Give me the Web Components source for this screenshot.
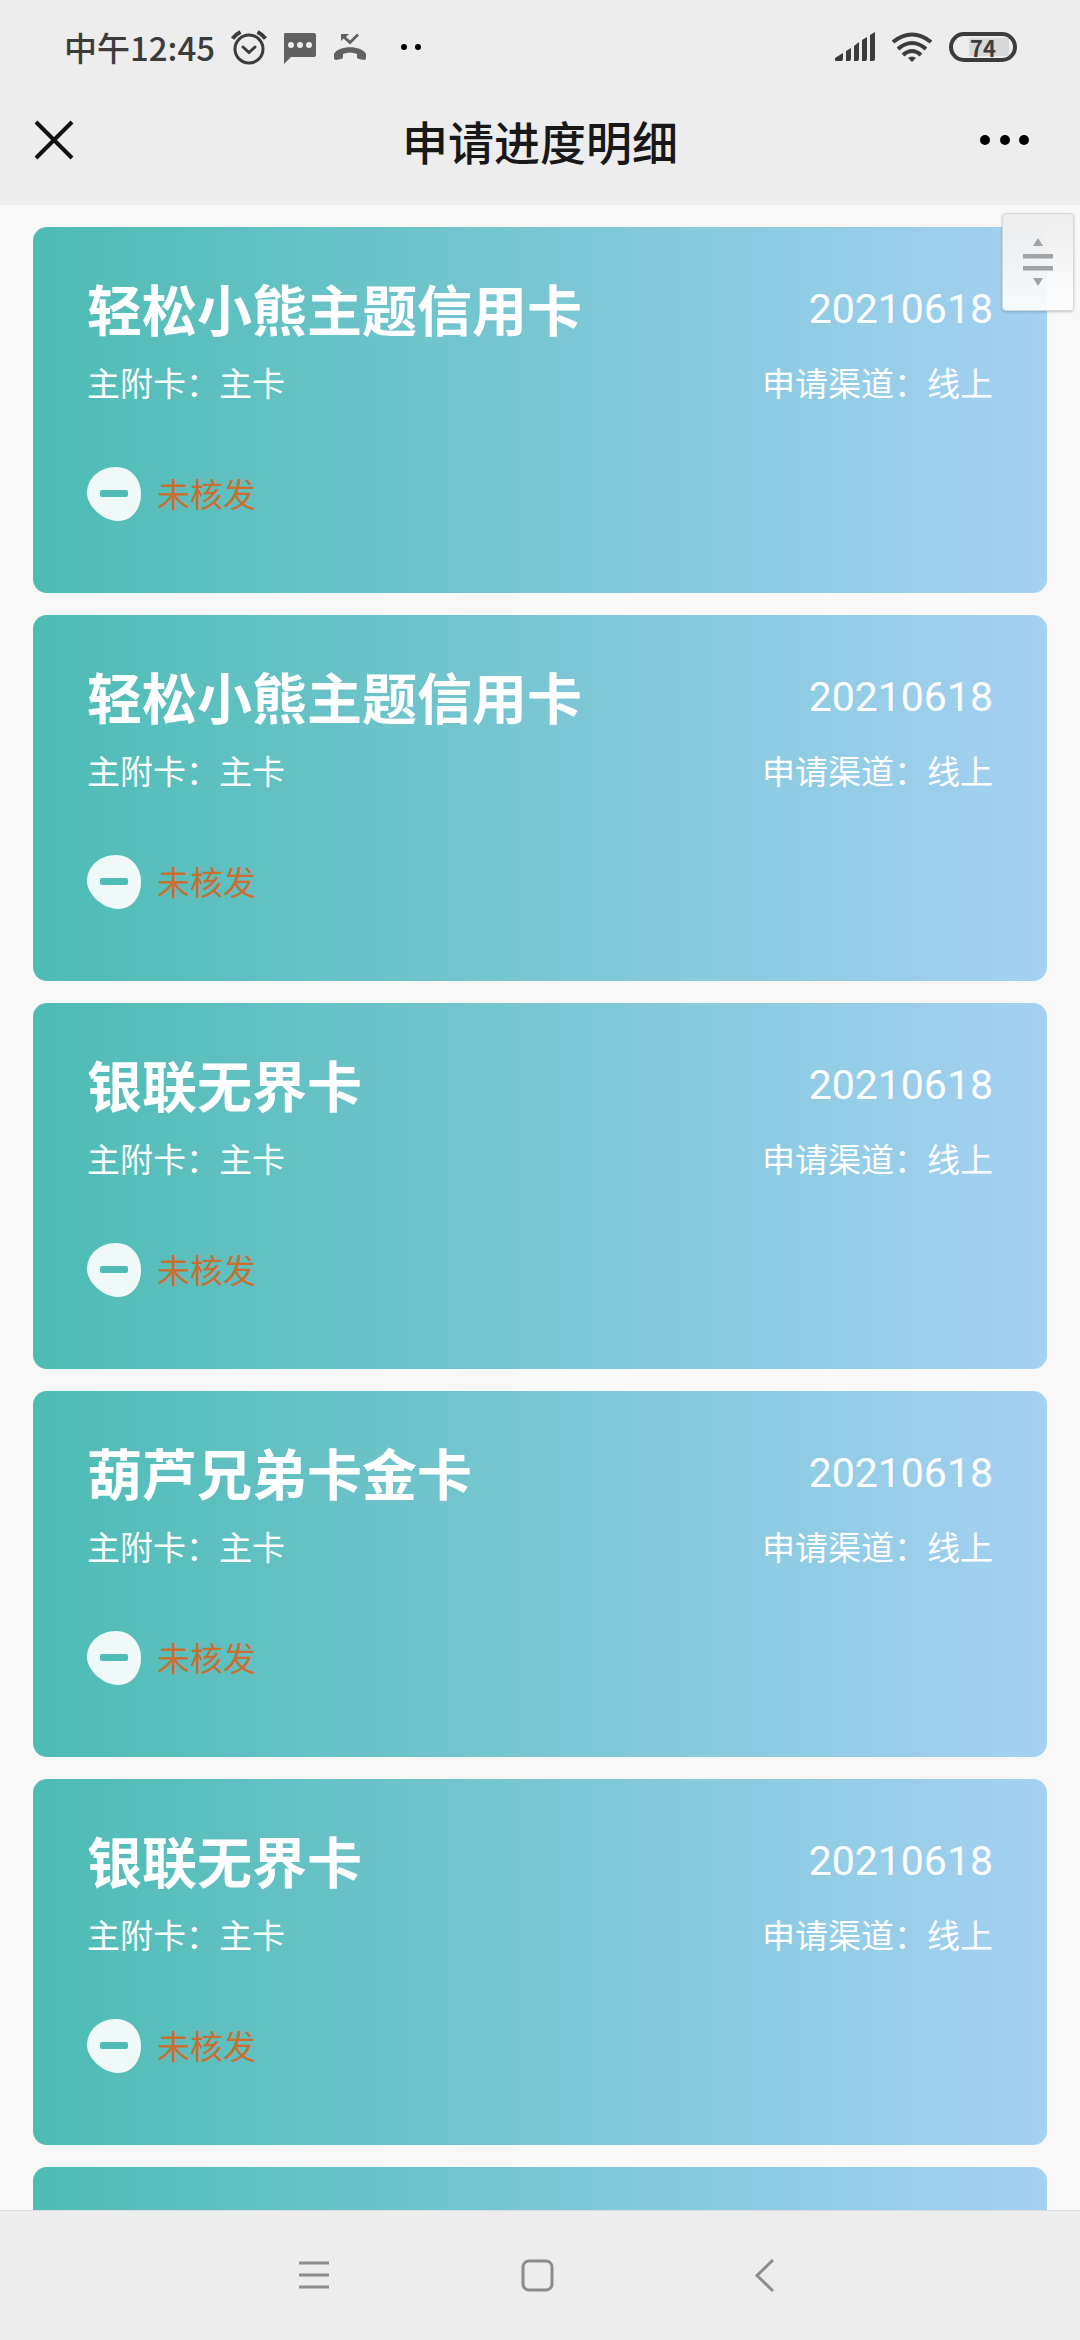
<!DOCTYPE html>
<html lang="zh-CN">
<head>
<meta charset="utf-8">
<meta name="viewport" content="width=device-width, initial-scale=1">
<title>申请进度明细</title>
<style>
  body {
    margin: 0;
    background: #f8f8f8;
    font-family: Roboto, "Noto Sans CJK SC", sans-serif;
  }
</style>
</head>
<body>
<progress-page>
  <status-bar slot="top" time="中午12:45" battery="74"></status-bar>
  <title-bar slot="top">申请进度明细</title-bar>

  <apply-card>
    <span slot="name">轻松小熊主题信用卡</span>
    <span slot="date">20210618</span>
    <span slot="type">主附卡：主卡</span>
    <span slot="channel">申请渠道：线上</span>
    <span slot="state">未核发</span>
  </apply-card>
  <apply-card>
    <span slot="name">轻松小熊主题信用卡</span>
    <span slot="date">20210618</span>
    <span slot="type">主附卡：主卡</span>
    <span slot="channel">申请渠道：线上</span>
    <span slot="state">未核发</span>
  </apply-card>
  <apply-card>
    <span slot="name">银联无界卡</span>
    <span slot="date">20210618</span>
    <span slot="type">主附卡：主卡</span>
    <span slot="channel">申请渠道：线上</span>
    <span slot="state">未核发</span>
  </apply-card>
  <apply-card>
    <span slot="name">葫芦兄弟卡金卡</span>
    <span slot="date">20210618</span>
    <span slot="type">主附卡：主卡</span>
    <span slot="channel">申请渠道：线上</span>
    <span slot="state">未核发</span>
  </apply-card>
  <apply-card>
    <span slot="name">银联无界卡</span>
    <span slot="date">20210618</span>
    <span slot="type">主附卡：主卡</span>
    <span slot="channel">申请渠道：线上</span>
    <span slot="state">未核发</span>
  </apply-card>
  <apply-card></apply-card>

  <scroll-handle slot="float"></scroll-handle>
  <nav-bar slot="bottom"></nav-bar>
</progress-page>

<script>
function attach(el, html) {
  const template = document.createElement("template");
  template.innerHTML = html;
  el.attachShadow({ mode: "open" });
  el.shadowRoot.appendChild(template.content.cloneNode(true));
}

// page frame: bars at top and bottom, scrolling list between them
class ProgressPage extends HTMLElement {
  constructor() {
    super();
    attach(this, `
<style>
:host {
  display: flex;
  flex-direction: column;
  height: 100vh;
}

main {
  position: relative;
  flex: 1;
  min-height: 0;
  overflow: hidden;
}

.list {
  display: flex;
  flex-direction: column;
  gap: 22px;
  box-sizing: border-box;
  height: 100%;
  padding: 22px 33px;
  overflow-y: auto;
  scrollbar-width: none;
}
</style>
<header><slot name="top"></slot></header>
<main>
  <div class="list"><slot></slot></div>
  <slot name="float"></slot>
</main>
<slot name="bottom"></slot>`);
  }
}

class StatusBar extends HTMLElement {
  constructor() {
    super();
    attach(this, `
<style>
:host {
  display: flex;
  align-items: center;
  justify-content: space-between;
  height: 94px;
  padding: 0 63px 0 64px;
  background: #ededed;
  color: #3c3c3c;
}

.side {
  display: flex;
  align-items: center;
  gap: 16px;
}

.time {
  font: 500 33px/48px "Noto Sans CJK SC", sans-serif;
}

svg {
  display: block;
}

.battery {
  display: flex;
  align-items: center;
  justify-content: center;
  box-sizing: border-box;
  width: 68px;
  height: 30px;
  border: 4px solid #3c3c3c;
  border-radius: 15px;
  background: linear-gradient(#d8d8d8, #d8d8d8) 16px 2px / 40px 18px no-repeat;
  font: 700 22px/24px "Noto Sans CJK SC", sans-serif;
}
</style>
<div class="side">
  <span class="time"></span>
  <svg width="36" height="36" viewBox="0 0 36 36" fill="none" stroke="#3c3c3c" stroke-width="3">
    <circle cx="18" cy="20" r="14"/>
    <path d="M12 18l6 5.500 6-5.500" stroke-linecap="round"/>
    <path d="M1.500 9.500q3-4 8-6.500M34.500 9.500q-3-4-8-6.500" stroke-width="4"/>
  </svg>
  <svg width="34" height="34" viewBox="0 0 34 34">
    <path d="M2 3h29q2 0 2 2v20q0 2-2 2H8l-7 7V5q0-2 1-2z" fill="#616161"/>
    <g fill="#ededed"><circle cx="8" cy="15" r="3"/><circle cx="17" cy="15" r="3"/><circle cx="26" cy="15" r="3"/></g>
  </svg>
  <svg width="34" height="34" viewBox="0 0 34 34" fill="#616161">
    <path d="M1 24C5 15 29 15 33 24v4q0 2-2 2l-5-1q-2 0-2-2v-3q-7-3-14 0v3q0 2-2 2l-5 1q-2 0-2-2z"/>
    <path d="M8 4h8l-3 3 4 3.500 7-7 2 2-9 9-6.500-6L8 11z"/>
  </svg>
  <svg width="56" height="34" viewBox="0 0 56 34">
    <circle cx="21" cy="17" r="3"/><circle cx="35" cy="17" r="3"/>
  </svg>
</div>
<div class="side">
  <svg width="40" height="30" viewBox="0 0 40 30" fill="#3c3c3c">
    <path d="M0 26l8-5v6q0 2-2 2H1q-1 0-1-1z"/>
    <path d="M11 19l5-3v11q0 2-2 2h-3zM19 14l5-4v17q0 2-2 2h-3zM27 8l5-3v22q0 2-2 2h-3zM35 3l5-3v27q0 2-2 2h-3z"/>
  </svg>
  <svg width="42" height="30" viewBox="0 0 42 30" fill="none" stroke="#3c3c3c" stroke-width="4">
    <path d="M2 10q19-15 38 0M7 17q14-12 28 0M12 23q9-8 18 0"/>
    <path d="M17 26q4-3 8 0l-4 4z" fill="#3c3c3c" stroke="none"/>
  </svg>
  <span class="battery"></span>
</div>`);
    this.shadowRoot.querySelector(".time").textContent = this.getAttribute("time");
    this.shadowRoot.querySelector(".battery").textContent = this.getAttribute("battery");
  }
}

class TitleBar extends HTMLElement {
  constructor() {
    super();
    attach(this, `
<style>
:host {
  display: grid;
  grid-template-columns: 1fr auto 1fr;
  align-items: center;
  height: 92px;
  padding: 0 32px 19px;
  background: #ededed;
}

h1 {
  margin: 0;
  color: #181818;
  font: 500 46px/64px "Noto Sans CJK SC", sans-serif;
}

button {
  display: block;
  padding: 0;
  border: 0;
  background: none;
}

button:last-of-type {
  justify-self: end;
}

svg {
  display: block;
}
</style>
<button type="button" aria-label="关闭">
  <svg width="44" height="44" viewBox="0 0 44 44" stroke="#111" stroke-width="4"><path d="M4 4l36 36M40 4L4 40"/></svg>
</button>
<h1><slot></slot></h1>
<button type="button" aria-label="更多">
  <svg width="72" height="44" viewBox="0 0 72 44">
    <circle cx="9" cy="22" r="5"/><circle cx="29" cy="22" r="5"/><circle cx="48" cy="22" r="5"/>
  </svg>
</button>`);
  }
}

class ApplyCard extends HTMLElement {
  constructor() {
    super();
    attach(this, `
<style>
:host {
  display: block;
  flex: none;
  box-sizing: border-box;
  min-height: 366px;
  padding: 52px 54px;
  border-radius: 14px;
  background: linear-gradient(to right, #4dbcb4, #a5d1f3);
  color: #fff;
}

:host(:empty) * {
  display: none;
}

.row {
  display: flex;
  justify-content: space-between;
  font-size: 33px;
  line-height: 48px;
}

.head {
  align-items: flex-start;
  margin-bottom: 16px;
}

h2 {
  margin: 0;
  font-size: 55px;
  font-weight: 700;
  line-height: 66px;
}

.date {
  font-size: 41px;
  line-height: 60px;
}

.state {
  display: flex;
  align-items: flex-start;
  gap: 16px;
  margin-top: 58px;
  color: #c96f30;
  font-size: 33px;
  line-height: 58px;
}
</style>
<div class="row head">
  <h2><slot name="name"></slot></h2>
  <span class="date"><slot name="date"></slot></span>
</div>
<div class="row">
  <slot name="type"></slot>
  <slot name="channel"></slot>
</div>
<div class="state">
  <svg width="54" height="54" viewBox="0 0 54 54">
    <path d="M29 0C44 0 54 12 54 27S45 54 31 54C22 54 13 49 7 42 2 36 0 31 0 26 0 11 13 0 29 0z" fill="#eef9f8"/>
    <rect x="13" y="23" width="28" height="7" rx="2" fill="#4fbcb5"/>
  </svg>
  <slot name="state"></slot>
</div>`);
  }
}

// drag handle floating over the list
class ScrollHandle extends HTMLElement {
  constructor() {
    super();
    attach(this, `
<style>
:host {
  position: absolute;
  top: 8px;
  right: 6px;
}

button {
  display: block;
  width: 72px;
  height: 98px;
  padding: 0;
  border: 1px solid #d4d6d8;
  border-radius: 4px;
  background: linear-gradient(rgba(236, 236, 236, 0.97), rgba(255, 255, 255, 0.9));
  box-shadow: 0 1px 3px rgba(0, 0, 0, 0.2);
}

svg {
  display: block;
  margin: auto;
}
</style>
<button type="button" aria-label="滚动">
  <svg width="30" height="50" viewBox="0 0 30 50" fill="#a0a2a4">
    <path d="M15 1l5 8H10zM15 49l5-8H10z"/>
    <rect y="17" width="30" height="4.500"/><rect y="29" width="30" height="4.500"/>
  </svg>
</button>`);
  }
}

class NavBar extends HTMLElement {
  constructor() {
    super();
    attach(this, `
<style>
:host {
  display: flex;
  justify-content: center;
  border-top: 1px solid #dcdcdc;
  background: #ededed;
}

button {
  width: 225px;
  height: 129px;
  padding: 0;
  border: 0;
  background: none;
}

svg {
  display: block;
  margin: auto;
}
</style>
<button type="button" aria-label="最近任务">
  <svg width="48" height="48" viewBox="0 0 48 48" stroke="#8c8c8c" stroke-width="3"><path d="M8 11h30M8 23h30M8 35h30"/></svg>
</button>
<button type="button" aria-label="主屏幕">
  <svg width="48" height="48" viewBox="0 0 48 48" fill="none" stroke="#8c8c8c" stroke-width="3"><rect x="7" y="9" width="29" height="29" rx="6"/></svg>
</button>
<button type="button" aria-label="返回">
  <svg width="48" height="48" viewBox="0 0 48 48" fill="none" stroke="#8c8c8c" stroke-width="3"><path d="M32 8L16 23.500 32 39"/></svg>
</button>`);
  }
}

window.customElements.define("progress-page", ProgressPage);
window.customElements.define("status-bar", StatusBar);
window.customElements.define("title-bar", TitleBar);
window.customElements.define("apply-card", ApplyCard);
window.customElements.define("scroll-handle", ScrollHandle);
window.customElements.define("nav-bar", NavBar);
</script>
</body>
</html>
